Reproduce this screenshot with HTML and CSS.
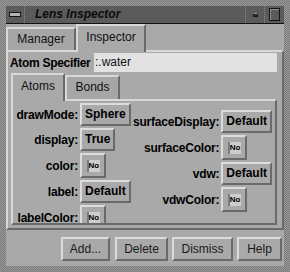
FILE: index.html
```html
<!DOCTYPE html>
<html lang="en">
<head>
  <meta charset="UTF-8">
  <title>Lens Inspector</title>
  <link rel="stylesheet" href="styles.css">
</head>
<body>
  <div class="window">
    <div class="titlebar">
      <div class="tb-menu"><span class="menu-icon"></span></div>
      <div class="tb-title">Lens Inspector</div>
      <div class="tb-btn"><span class="min-icon"></span></div>
      <div class="tb-btn max"><span class="max-icon"></span></div>
    </div>

    <div class="client">
      <div class="tabs">
        <div class="tab">Manager</div>
        <div class="tab active">Inspector</div>
      </div>

      <div class="page">
        <div class="spec-row">
          <span class="spec-label">Atom Specifier</span>
          <div class="field">:.water</div>
        </div>

        <div class="tabs inner">
          <div class="tab active">Atoms</div>
          <div class="tab">Bonds</div>
        </div>

        <div class="inner-page">
          <div class="col col-left">
            <span class="lbl">drawMode:</span><button class="btn">Sphere</button>
            <span class="lbl">display:</span><button class="btn">True</button>
            <span class="lbl">color:</span><button class="btn swatch"><span class="chip">No</span></button>
            <span class="lbl">label:</span><button class="btn">Default</button>
            <span class="lbl">labelColor:</span><button class="btn swatch"><span class="chip">No</span></button>
          </div>
          <div class="col col-right">
            <span class="lbl">surfaceDisplay:</span><button class="btn">Default</button>
            <span class="lbl">surfaceColor:</span><button class="btn swatch"><span class="chip">No</span></button>
            <span class="lbl">vdw:</span><button class="btn">Default</button>
            <span class="lbl">vdwColor:</span><button class="btn swatch"><span class="chip">No</span></button>
          </div>
        </div>
      </div>

      <div class="actions">
        <button class="act w-add">Add...</button>
        <button class="act w-del">Delete</button>
        <button class="act w-dis">Dismiss</button>
        <button class="act w-help">Help</button>
      </div>
    </div>
  </div>
</body>
</html>
```

FILE: styles.css
```css
body {
  margin: 0;
  font-family: "Liberation Sans", Arial, sans-serif;
  background: #8a8a8a;
}
.window {
  width: 290px;
  height: 272px;
  box-sizing: border-box;
  padding: 6px;
  background: repeating-conic-gradient(#9a9a9a 0 25%, #7a7a7a 0 50%) 0 0 / 2px 2px;
  display: flex;
  flex-direction: column;
}

/* title bar */
.titlebar {
  height: 17px;
  border-bottom: 1px solid #111;
  background: #5b5b5b;
  display: flex;
}
.tb-menu {
  width: 18px;
  border-right: 1px dotted #8c8c8c;
  display: flex;
  align-items: center;
  justify-content: center;
}
.menu-icon {
  width: 10px;
  height: 3px;
  border: 1px solid #161616;
  background: #b4b4b4;
}
.tb-title {
  flex: 1;
  padding-left: 10px;
  font-size: 12px;
  font-weight: bold;
  font-style: italic;
  line-height: 17px;
  color: #0c0c0c;
}
.tb-btn {
  width: 18px;
  border-left: 1px dotted #8c8c8c;
  display: flex;
  align-items: center;
  justify-content: center;
}
.tb-btn.max {
  width: 19px;
}
.min-icon {
  width: 3px;
  height: 2px;
  border: 1px solid #1a1a1a;
  border-top-color: #9a9a9a;
  background: #2a2a2a;
}
.max-icon {
  width: 9px;
  height: 11px;
  border: 1px solid #141414;
  box-shadow: inset 1px 1px 0 #8e8e8e;
}

/* client area */
.client {
  flex: 1;
  background: #a9a9a9;
  display: flex;
  flex-direction: column;
}
.tabs {
  display: flex;
  align-items: flex-end;
  height: 26px;
  font-size: 12px;
  color: #111;
}
.tab {
  box-sizing: border-box;
  width: 70px;
  height: 23px;
  border: 2px solid;
  border-color: #d8d8d8 #6a6a6a transparent #d8d8d8;
  border-bottom: none;
  text-align: center;
  line-height: 21px;
  background: #a6a6a6;
}
.tab.active {
  position: relative;
  z-index: 1;
  height: 28px;
  margin-bottom: -2px;
  line-height: 22px;
  background: #a9a9a9;
}
.page {
  height: 180px;
  box-sizing: border-box;
  border: 2px solid;
  border-color: #d8d8d8 #6a6a6a #6a6a6a #d8d8d8;
  padding: 1px 5px 0 3px;
}

.spec-row {
  display: flex;
  align-items: center;
  height: 19px;
}
.spec-label {
  width: 84px;
  margin-left: -1px;
  white-space: nowrap;
  font-size: 12px;
  font-weight: bold;
  letter-spacing: -0.3px;
  color: #000;
}
.field {
  flex: 1;
  height: 19px;
  background: #e2e2e2;
  font-size: 12px;
  line-height: 19px;
  padding-left: 1px;
  color: #111;
}

.tabs.inner {
  margin-top: 1px;
}
.tabs.inner .tab {
  width: 55px;
  height: 24px;
}
.tabs.inner .tab.active {
  width: 54px;
  height: 28px;
}

.inner-page {
  height: 126px;
  box-sizing: border-box;
  border: 2px solid;
  border-color: #d8d8d8 #6a6a6a #6a6a6a #d8d8d8;
  display: flex;
  overflow: hidden;
}
.col {
  display: grid;
  grid-template-columns: auto auto;
  column-gap: 2px;
  row-gap: 2px;
  align-content: start;
  justify-items: start;
}
.col-left {
  grid-template-columns: 65px auto;
  padding-top: 2px;
}
.col-right {
  margin-left: auto;
  padding: 9px 3px 0 0;
}
.lbl {
  justify-self: end;
  align-self: center;
  white-space: nowrap;
  font-size: 12px;
  font-weight: bold;
  letter-spacing: -0.2px;
  color: #000;
}
.btn {
  box-sizing: border-box;
  height: 23px;
  margin: 0;
  padding: 0 3px;
  border: 2px solid;
  border-color: #dcdcdc #6a6a6a #6a6a6a #dcdcdc;
  background: #a9a9a9;
  font-family: inherit;
  font-size: 12px;
  font-weight: bold;
  color: #000;
  line-height: 19px;
}
.btn.swatch {
  width: 26px;
  height: 25px;
  padding: 0;
  display: flex;
  align-items: center;
  justify-content: center;
}
.chip {
  width: 11px;
  height: 12px;
  background: #cdcdcd;
  border-left: 2px solid #7c7c7c;
  font-size: 8px;
  font-weight: bold;
  line-height: 12px;
  text-align: left;
  color: #000;
}

/* bottom buttons */
.actions {
  display: flex;
  justify-content: flex-end;
  gap: 4px;
  padding: 7px 2px 0 0;
}
.act {
  box-sizing: border-box;
  height: 24px;
  margin: 0;
  border: 2px solid;
  border-color: #dcdcdc #6a6a6a #6a6a6a #dcdcdc;
  background: #a9a9a9;
  font-family: inherit;
  font-size: 12px;
  color: #1a1a1a;
}
.w-add { width: 49px; margin-right: 1px; }
.w-del { width: 53px; }
.w-dis { width: 61px; }
.w-help { width: 45px; }
```
